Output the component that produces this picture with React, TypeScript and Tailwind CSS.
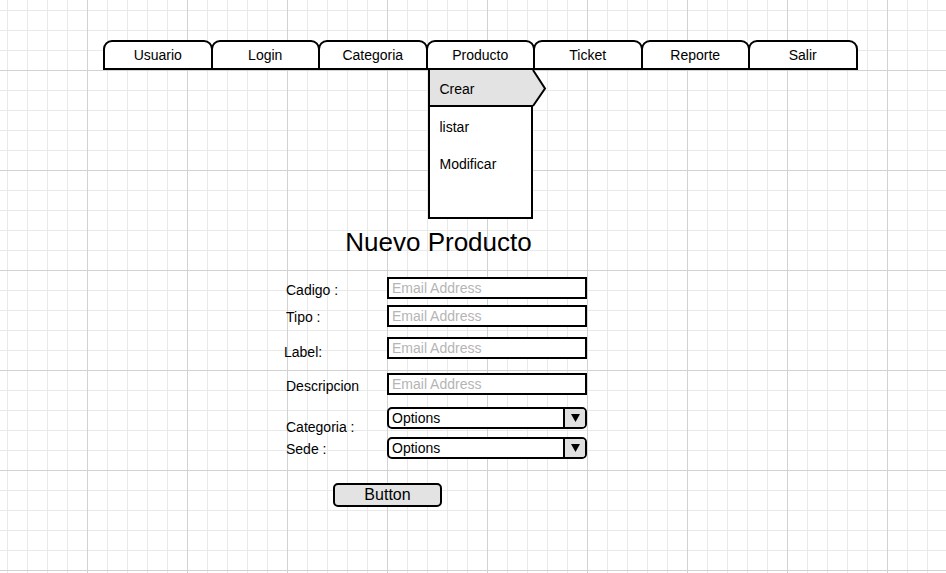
const tabs = ["Usuario", "Login", "Categoria", "Producto", "Ticket", "Reporte", "Salir"];

function TextField({ label, labelClass, rowClass }: { label: string; labelClass: string; rowClass: string }) {
  return (
    <div className={`flex items-start h-[22px] ${rowClass}`}>
      <div className={`w-[103px] shrink-0 text-[14px] leading-[16px] text-black ${labelClass}`}>{label}</div>
      <div className="h-[22px] w-[200px] border-2 border-black bg-white flex items-center px-[3px] text-[14px] text-[#b5b5b5]">
        Email Address
      </div>
    </div>
  );
}

function SelectField({ label, labelClass, rowClass }: { label: string; labelClass: string; rowClass: string }) {
  return (
    <div className={`flex items-start h-[22px] ${rowClass}`}>
      <div className={`w-[103px] shrink-0 text-[14px] leading-[16px] text-black ${labelClass}`}>{label}</div>
      <div className="h-[22px] w-[200px] border-2 border-black rounded-[5px] bg-white flex overflow-hidden">
        <div className="flex-1 flex items-center px-[3px] text-[14px] text-black">Options</div>
        <div className="w-[22px] border-l-2 border-black bg-[#e0e0e0] flex items-center justify-center">
          <svg width="9" height="8" viewBox="0 0 9 8">
            <polygon points="0,0 9,0 4.5,8" fill="#000" />
          </svg>
        </div>
      </div>
    </div>
  );
}

export default function App() {
  return (
    <div className="min-h-screen w-full bg-white bg-[linear-gradient(to_right,#d2d2d2_1px,transparent_1px),linear-gradient(to_bottom,#d2d2d2_1px,transparent_1px),linear-gradient(to_right,#e9e9e9_1px,transparent_1px),linear-gradient(to_bottom,#e9e9e9_1px,transparent_1px)] [background-size:100px_100px,100px_100px,20px_20px,20px_20px] [background-position:87px_0,0_70px,7px_0,0_10px] pt-[40px] font-['Liberation_Sans',Arial,sans-serif] text-black">
      {/* Top nav tabs */}
      <div className="flex pl-[103px]">
        {tabs.map((t, i) => (
          <div
            key={t}
            className={`relative h-[30px] w-[109.5px] border-2 border-black rounded-t-[9px] bg-white flex items-center justify-center text-[14px] ${i > 0 ? "-ml-[2px]" : ""}`}
          >
            {t}
            {t === "Producto" && (
              <div className="absolute left-0 top-[calc(100%+2px)] w-[105px] h-[149px] border-x-2 border-b-2 border-black bg-white z-10 text-[14px] leading-[16px]">
                <div className="relative -mr-[2px] h-[37px] bg-[#e3e3e3] border-b-2 border-black flex items-center pt-[3px] pl-[10px]">
                  Crear
                  <svg className="absolute left-full top-0 overflow-visible" width="13" height="37" viewBox="0 0 13 37">
                    <polygon points="0,0 12,18.5 0,37" fill="#e3e3e3" />
                    <polyline points="0,0 12,18.5 0,36" fill="none" stroke="#000" strokeWidth="2" />
                  </svg>
                </div>
                <div className="mt-[12px] pl-[10px]">listar</div>
                <div className="mt-[21px] pl-[10px]">Modificar</div>
              </div>
            )}
          </div>
        ))}
      </div>

      {/* Title */}
      <div className="mt-[157px] w-[877px] text-center text-[26px] leading-[30px]">Nuevo Producto</div>

      {/* Form */}
      <div className="ml-[284px] flex flex-col">
        <TextField label="Cadigo :" labelClass="pl-[2px] mt-[5px]" rowClass="mt-[20px]" />
        <TextField label="Tipo :" labelClass="pl-[2px] mt-[4px]" rowClass="mt-[6px]" />
        <TextField label="Label:" labelClass="pl-0 mt-[7px]" rowClass="mt-[10px]" />
        <TextField label="Descripcion" labelClass="pl-[2px] mt-[5px]" rowClass="mt-[14px]" />
        <SelectField label="Categoria :" labelClass="pl-[2px] mt-[12px]" rowClass="mt-[12px]" />
        <SelectField label="Sede :" labelClass="pl-[2px] mt-[4px]" rowClass="mt-[8px]" />
        <button className="ml-[49px] mt-[24px] h-[24px] w-[109px] rounded-[5px] border-2 border-black bg-[#e3e3e3] text-[16px] leading-[18px] flex items-center justify-center">
          Button
        </button>
      </div>
    </div>
  );
}
